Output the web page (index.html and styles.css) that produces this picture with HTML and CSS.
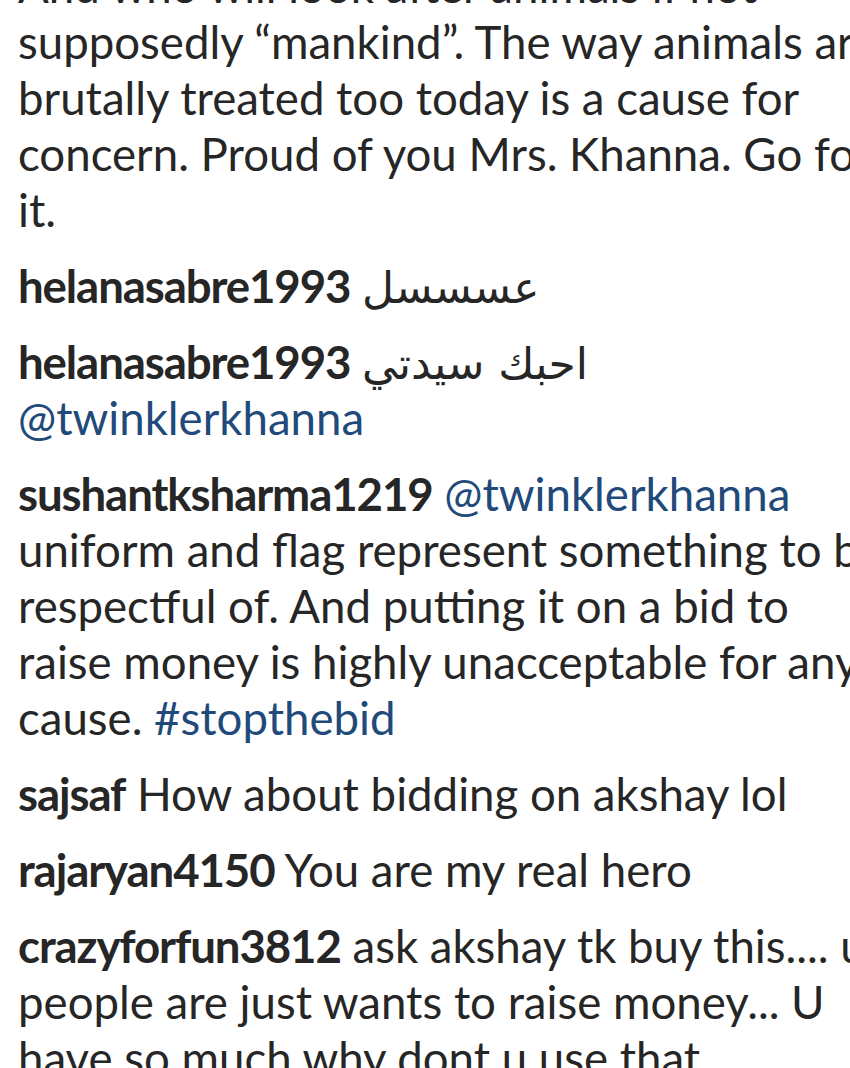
FILE: index.html
```html
<!DOCTYPE html>
<html lang="en">
<head>
<meta charset="utf-8">
<title>Comments</title>
<link rel="stylesheet" href="styles.css">
</head>
<body>
<ul class="comments">
  <li class="comment">And who will look after animals if not supposedly “mankind”. The way animals are brutally treated too today is a cause for concern. Proud of you Mrs. Khanna. Go for it.</li>
  <li class="comment"><a class="user">helanasabre1993</a> <bdi class="ar" dir="rtl">عسسسل</bdi></li>
  <li class="comment"><a class="user">helanasabre1993</a> <bdi class="ar" dir="rtl">احبك سيدتي</bdi> <a class="link">@twinklerkhanna</a></li>
  <li class="comment"><a class="user">sushantksharma1219</a> <a class="link">@twinklerkhanna</a> uniform and flag represent something to be respectful of. And putting it on a bid to raise money is highly unacceptable for any cause. <a class="link">#stopthebid</a></li>
  <li class="comment"><a class="user">sajsaf</a> How about bidding on akshay lol</li>
  <li class="comment"><a class="user">rajaryan4150</a> You are my real hero</li>
  <li class="comment"><a class="user">crazyforfun3812</a> ask akshay tk buy this.... u people are just wants to raise money... U have so much why dont u use that</li>
</ul>
</body>
</html>
```
FILE: styles.css
```css
html, body {
  margin: 0;
  padding: 0;
  background: #ffffff;
  overflow: hidden;
}
body {
  width: 850px;
  height: 1068px;
  font-family: Lato, "Open Sans", "DejaVu Sans", sans-serif;
  color: #262626;
}
.comments {
  list-style: none;
  margin: -42px 0 0 0;
  padding: 0 0 0 18px;
  width: 866px;
  display: flex;
  flex-direction: column;
  gap: 20px;
}
.comment {
  font-size: 45.6px;
  line-height: 56px;
  word-wrap: break-word;
}
.user {
  font-weight: 700;
  letter-spacing: -1.1px;
  color: #262626;
}
.link {
  color: #1f4a7a;
}
.ar {
  font-family: "DejaVu Sans", sans-serif;
  font-size: 44px;
  line-height: 40px;
}
```
